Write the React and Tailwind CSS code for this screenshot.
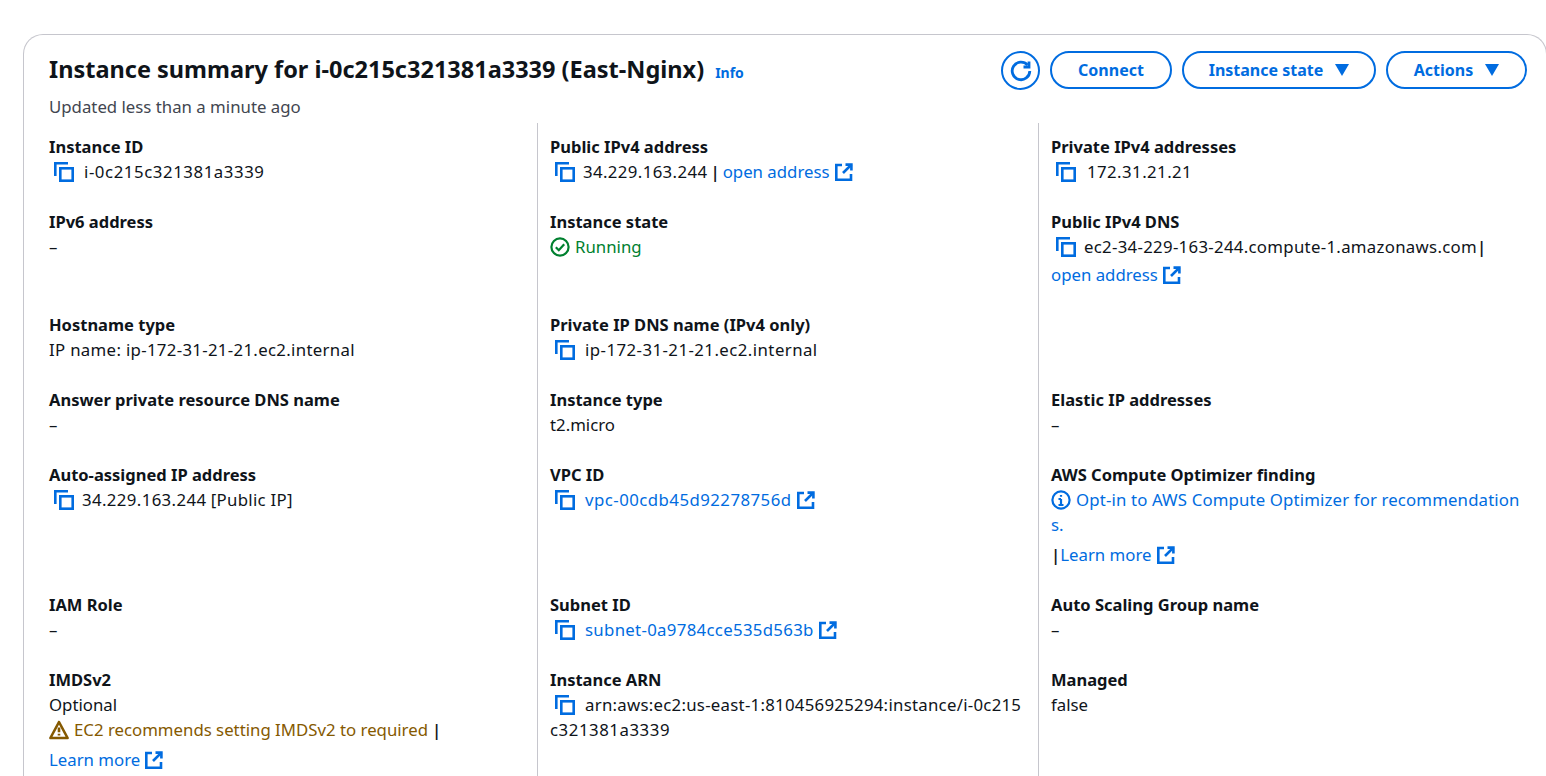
import React from 'react';

const CopyIcon = () => (
  <svg viewBox="0 0 20 20" className="w-5 h-5 shrink-0 ml-[5px]" fill="none" stroke="#006ce0" strokeWidth="2.6">
    <path d="M1.3 14V1.3H14" />
    <rect x="6.3" y="6.3" width="12.4" height="12.4" />
  </svg>
);

const ExternalIcon = () => (
  <svg viewBox="0 0 18 18" className="inline-block w-[18px] h-[18px] ml-[5px] align-[-3px]" fill="none" stroke="#006ce0" strokeWidth="2.6">
    <path d="M7 2H1.3v14.7H16V11" />
    <path d="M10.5 1.6h5.9v5.9" />
    <path d="M16.4 1.6L8 10" />
  </svg>
);

const Ext = ({ children, className = '' }) => (
  <span className="text-[#006ce0]"><span className={className}>{children}</span><ExternalIcon /></span>
);

const Field = ({ label, children, first, top }) => (
  <div className={`pb-[25px] ${first ? 'pr-3' : 'pl-3 border-l border-[#c6c6cd]'} ${top ? 'pt-[11px]' : ''}`}>
    <div className="font-bold text-[16.5px] leading-[25px] h-[25px] whitespace-nowrap">{label}</div>
    {children}
  </div>
);

const Line = ({ children, className = '' }) => (
  <div className={`leading-[25px] h-[25px] whitespace-nowrap ${className}`}>{children}</div>
);

const Copy = ({ children, gap }) => (
  <Line className="flex items-center">
    <CopyIcon />
    <span className={gap}>{children}</span>
  </Line>
);

const Btn = ({ children, caret, width }) => (
  <button className={`h-[38px] ${width} rounded-full border-2 border-[#006ce0] text-[#006ce0] text-[16px] font-bold flex items-center justify-center gap-3`}>
    {children}
    {caret && (
      <svg viewBox="0 0 14 12" className="w-[14px] h-3" fill="#006ce0"><path d="M0 0h14L7 12z" /></svg>
    )}
  </button>
);

export default function App() {
  return (
    <div className="h-screen overflow-hidden bg-white pt-[34px] pl-[23px] text-[16.8px] text-[#0f141a] font-['Noto_Sans',sans-serif]">
      <div className="w-[1524px] rounded-t-[20px] border border-[#c6c6cd] border-b-0 pl-[25px]">
        {/* header */}
        <div className="h-[88px] flex justify-between items-start pr-[19px]">
          <div>
            <div className="flex items-baseline mt-[18px] leading-[32px]">
              <h1 className="text-[23.5px] font-bold">Instance summary for i-0c215c321381a3339 (East-Nginx)</h1>
              <span className="ml-[11px] text-[14px] font-bold text-[#006ce0]">Info</span>
            </div>
            <p className="text-[#424650] leading-[25px] mt-[5px]">Updated less than a minute ago</p>
          </div>
          <div className="flex gap-[10px] mt-4">
            <button className="w-[39px] h-[39px] rounded-full border-2 border-[#006ce0] flex items-center justify-center">
              <svg viewBox="0 0 24 24" className="w-6 h-6" fill="none" stroke="#006ce0" strokeWidth="2.8">
                <path d="M18.5 6A8.8 8.8 0 1 0 20.8 12" />
                <path d="M20 2.5V8h-5.5" />
              </svg>
            </button>
            <Btn width="w-[122px]">Connect</Btn>
            <Btn width="w-[194px]" caret>Instance state</Btn>
            <Btn width="w-[141px]" caret>Actions</Btn>
          </div>
        </div>

        {/* details grid */}
        <div className="grid grid-cols-[488px_501px_1fr] -mb-2">
          <Field first top label="Instance ID"><Copy gap="ml-[10px] tracking-[0.57px]">i-0c215c321381a3339</Copy></Field>
          <Field top label="Public IPv4 address">
            <Copy gap="ml-[8px]">
              <span className="tracking-[0.38px]">34.229.163.244</span>
              <span className="ml-[3px] mr-[3px] font-semibold">|</span>
              <Ext>open address</Ext>
            </Copy>
          </Field>
          <Field top label="Private IPv4 addresses"><Copy gap="ml-[11px] tracking-[0.44px]">172.31.21.21</Copy></Field>

          <Field first label="IPv6 address"><Line>–</Line></Field>
          <Field label="Instance state">
            <Line className="flex items-center text-[#00802f]">
              <svg viewBox="0 0 20 20" className="w-5 h-5 mr-[5px]" fill="none" stroke="#00802f" strokeWidth="2.2">
                <circle cx="10" cy="10" r="8.6" />
                <path d="M5.8 10.2l3 3 5.4-6" />
              </svg>
              Running
            </Line>
          </Field>
          <Field label="Public IPv4 DNS">
            <Copy gap="ml-[8px]"><span className="tracking-[0.3px]">ec2-34-229-163-244.compute-1.amazonaws.com</span><span className="font-semibold">|</span></Copy>
            <Line className="h-[28px] leading-[31px]"><Ext>open address</Ext></Line>
          </Field>

          <Field first label="Hostname type"><Line className="tracking-[0.32px]">IP name: ip-172-31-21-21.ec2.internal</Line></Field>
          <Field label="Private IP DNS name (IPv4 only)"><Copy gap="ml-[10px] tracking-[0.45px]">ip-172-31-21-21.ec2.internal</Copy></Field>
          <Field label=""><span /></Field>

          <Field first label="Answer private resource DNS name"><Line>–</Line></Field>
          <Field label="Instance type"><Line>t2.micro</Line></Field>
          <Field label="Elastic IP addresses"><Line>–</Line></Field>

          <Field first label="Auto-assigned IP address"><Copy gap="ml-[8px]"><span className="tracking-[0.38px]">34.229.163.244</span> <span className="tracking-[0.3px]">[Public IP]</span></Copy></Field>
          <Field label="VPC ID"><Copy gap="ml-[10px]"><Ext className="tracking-[0.46px]">vpc-00cdb45d92278756d</Ext></Copy></Field>
          <Field label="AWS Compute Optimizer finding">
            <Line className="flex items-center text-[#006ce0]">
              <svg viewBox="0 0 20 20" className="w-5 h-5 mr-[5px]" fill="none" stroke="#006ce0" strokeWidth="2.2">
                <circle cx="10" cy="10" r="8.6" />
                <path d="M10 9v6M7.5 15h5M7.5 9H10M10 5v1.8" />
              </svg>
              <span className="tracking-[0.14px]">Opt-in to AWS Compute Optimizer for recommendation</span>
            </Line>
            <Line className="text-[#006ce0]">s.</Line>
            <Line className="h-[30px] leading-[35px]"><span className="font-semibold">|</span><Ext>Learn more</Ext></Line>
          </Field>

          <Field first label="IAM Role"><Line>–</Line></Field>
          <Field label="Subnet ID"><Copy gap="ml-[10px]"><Ext className="tracking-[0.31px]">subnet-0a9784cce535d563b</Ext></Copy></Field>
          <Field label="Auto Scaling Group name"><Line>–</Line></Field>

          <Field first label="IMDSv2">
            <Line>Optional</Line>
            <Line className="flex items-center text-[#855900]">
              <svg viewBox="0 0 20 20" className="w-5 h-5 mr-[5px]" fill="none" stroke="#855900" strokeWidth="2.6" strokeLinejoin="round">
                <path d="M10 2L1.4 18h17.2z" />
                <path d="M10 7.5v4.8M10 13.8v1.8" />
              </svg>
              EC2 recommends setting IMDSv2 to required
              <span className="text-[#0f141a] ml-[4px] font-semibold">|</span>
            </Line>
            <Line className="h-[30px] leading-[35px]"><Ext>Learn more</Ext></Line>
          </Field>
          <Field label="Instance ARN">
            <Copy gap="ml-[10px] tracking-[0.27px]">arn:aws:ec2:us-east-1:810456925294:instance/i-0c215</Copy>
            <Line className="tracking-[0.55px]">c321381a3339</Line>
          </Field>
          <Field label="Managed"><Line>false</Line></Field>
        </div>
      </div>
    </div>
  );
}
